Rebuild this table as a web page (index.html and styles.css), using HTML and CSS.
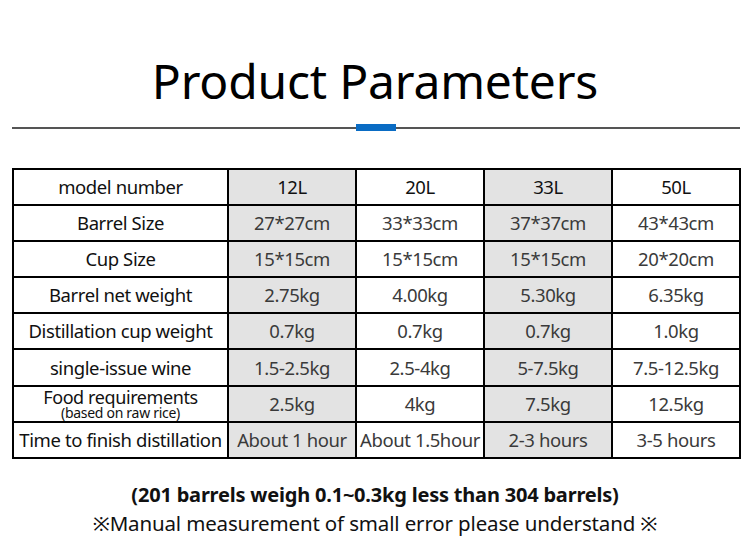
FILE: index.html
```html
<!DOCTYPE html>
<html>
<head>
<meta charset="utf-8">
<link rel="stylesheet" href="styles.css">
</head>
<body>
<div class="page">
  <h1 class="title">Product Parameters</h1>
  <div class="divider"><span class="accent"></span></div>
  <table class="params">
    <colgroup>
      <col class="c-label"><col class="c-val"><col class="c-val"><col class="c-val"><col class="c-val">
    </colgroup>
    <tr class="head"><td class="label">model number</td><td class="g">12L</td><td>20L</td><td class="g">33L</td><td>50L</td></tr>
    <tr><td class="label">Barrel Size</td><td class="g">27*27cm</td><td>33*33cm</td><td class="g">37*37cm</td><td>43*43cm</td></tr>
    <tr><td class="label">Cup Size</td><td class="g">15*15cm</td><td>15*15cm</td><td class="g">15*15cm</td><td>20*20cm</td></tr>
    <tr><td class="label">Barrel net weight</td><td class="g">2.75kg</td><td>4.00kg</td><td class="g">5.30kg</td><td>6.35kg</td></tr>
    <tr><td class="label">Distillation cup weight</td><td class="g">0.7kg</td><td>0.7kg</td><td class="g">0.7kg</td><td>1.0kg</td></tr>
    <tr><td class="label">single-issue wine</td><td class="g">1.5-2.5kg</td><td>2.5-4kg</td><td class="g">5-7.5kg</td><td>7.5-12.5kg</td></tr>
    <tr><td class="label two"><span class="l1">Food requirements</span><span class="l2">(based on raw rice)</span></td><td class="g">2.5kg</td><td>4kg</td><td class="g">7.5kg</td><td>12.5kg</td></tr>
    <tr><td class="label">Time to finish distillation</td><td class="g">About 1 hour</td><td>About 1.5hour</td><td class="g">2-3 hours</td><td>3-5 hours</td></tr>
  </table>
  <p class="note-bold">(201 barrels weigh 0.1~0.3kg less than 304 barrels)</p>
  <p class="note">※Manual measurement of small error please understand ※</p>
</div>
</body>
</html>
```
FILE: styles.css
```css
html, body {
  margin: 0;
  padding: 0;
  background: #ffffff;
}
.page {
  width: 750px;
  height: 548px;
  font-family: "Noto Sans", "Open Sans", sans-serif;
  color: #111;
  overflow: hidden;
}
.title {
  margin: 0;
  padding-top: 52px;
  height: 58px;
  line-height: 58px;
  text-align: center;
  font-weight: 400;
  font-size: 48px;
  letter-spacing: -0.2px;
  color: #000;
}
.divider {
  margin: 17px 10px 0 12px;
  height: 2px;
  background: #555;
  position: relative;
}
.accent {
  position: absolute;
  left: 344px;
  top: -3px;
  width: 40px;
  height: 7px;
  background: #0a6cc4;
}
.params {
  margin: 39px 0 0 12px;
  width: 728px;
  border-collapse: collapse;
  table-layout: fixed;
  border: 2px solid #000;
}
.c-label { width: 215px; }
.c-val { width: 128px; }
.params td {
  border: 2px solid #000;
  height: 34.1px;
  padding: 0;
  text-align: center;
  vertical-align: middle;
  font-size: 18.5px;
  letter-spacing: -0.4px;
  color: #3a3a3a;
  white-space: nowrap;
  line-height: 22px;
}
.params td.label {
  color: #111;
}
.params tr.head td {
  color: #111;
}
.params td.g {
  background: #e3e3e3;
}
.params td.two {
  line-height: 16px;
}
.l1 {
  display: block;
  font-size: 18px;
  line-height: 18px;
}
.l2 {
  display: block;
  font-size: 14px;
  line-height: 14px;
  letter-spacing: -0.3px;
}
.note-bold {
  margin: 22px 0 0;
  text-align: center;
  font-size: 20px;
  font-weight: 700;
  letter-spacing: -0.2px;
  line-height: 28px;
  color: #111;
}
.note {
  margin: 0;
  text-align: center;
  font-size: 20.5px;
  line-height: 28px;
  letter-spacing: -0.15px;
  color: #111;
}
```
